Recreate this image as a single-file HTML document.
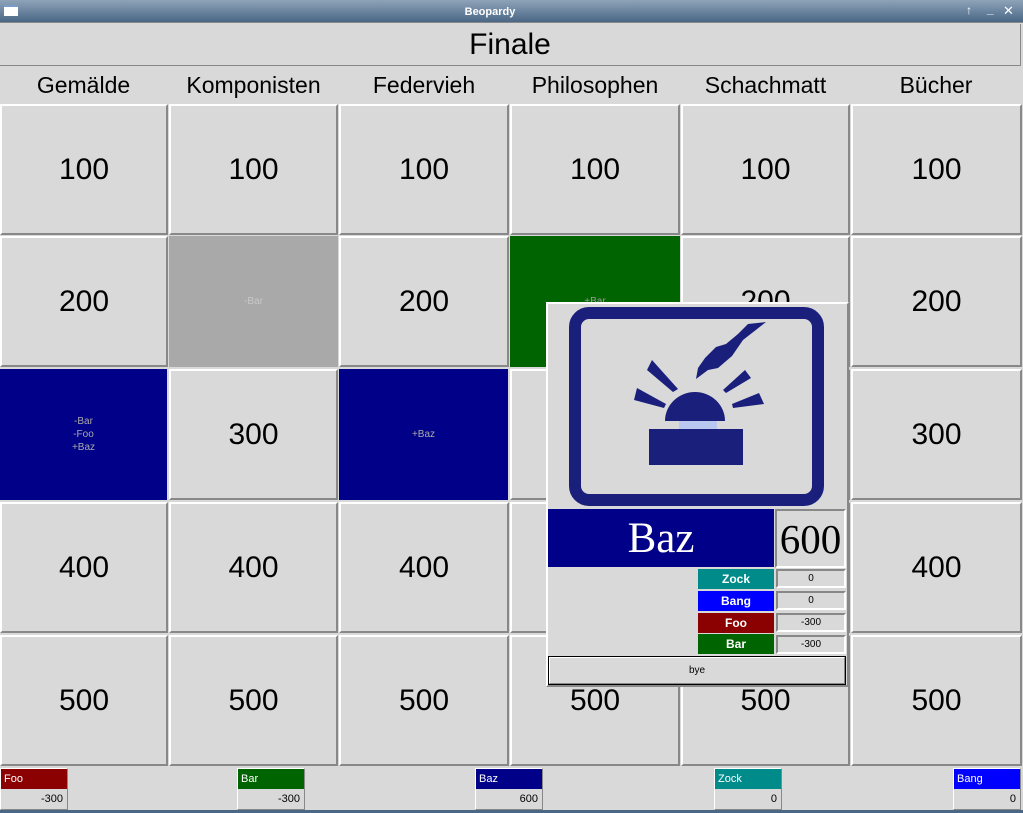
<!DOCTYPE html>
<html><head><meta charset="utf-8"><style>
*{margin:0;padding:0;box-sizing:border-box}
body{width:1023px;height:813px;overflow:hidden;background:#d9d9d9;font-family:"Liberation Sans","DejaVu Sans",sans-serif;position:relative}
.a{position:absolute}
.tb{left:0;top:0;width:1023px;height:23px;background:linear-gradient(#8ea3b8,#4a6786);border-bottom:1px solid #888}
.cell{position:absolute;background:#d9d9d9;border-top:2px solid #fff;border-left:2px solid #fff;border-right:2px solid #888;border-bottom:2px solid #888;display:flex;align-items:center;justify-content:center;font-size:30px;color:#000}
.flat{border:none}
.small{font-size:10px;color:#aaa;text-align:center;line-height:13px}
.hd{position:absolute;top:67px;height:36px;font-size:23px;display:flex;align-items:center;justify-content:center}
.pl{position:absolute;top:768px;width:68px;height:42px;border:1px solid #fff;border-right-color:#888;border-bottom-color:#888;background:#d9d9d9}
.pl .h{height:20px;color:#fff;font-size:11px;padding:4px 0 0 3px}
.pl .v{font-size:11px;text-align:right;padding:4px 4px 0 0}
.lab{position:absolute;left:698px;width:76px;height:20px;color:#fff;font-weight:bold;font-size:12px;display:flex;align-items:center;justify-content:center}
.val{position:absolute;left:776px;width:70px;height:19px;border:2px solid #888;border-right-color:#fff;border-bottom-color:#fff;font-size:10px;display:flex;align-items:center;justify-content:center}
</style></head><body>
<div class="a tb"></div>
<div class="a" style="left:4px;top:5px;width:14px;height:11px;background:#fff;border-top:2px solid #7a9cc8"></div>
<div class="a" style="left:0;top:6px;width:980px;text-align:center;color:#fff;font-size:11px;font-weight:bold">Beopardy</div>
<div class="a" style="left:966px;top:3px;color:#fff;font-size:12px;font-weight:bold">↑</div>
<div class="a" style="left:987px;top:2px;color:#fff;font-size:12px;font-weight:bold">_</div>
<div class="a" style="left:1003px;top:3px;color:#fff;font-size:13px;font-weight:bold">✕</div>
<div class="a" style="left:0;top:24px;width:1021px;height:42px;border-bottom:1px solid #888;border-right:1px solid #888;display:flex;align-items:center;justify-content:center;font-size:30px">Finale</div>
<div class="hd" style="left:0;width:167px">Gemälde</div>
<div class="hd" style="left:169px;width:169px">Komponisten</div>
<div class="hd" style="left:339px;width:170px">Federvieh</div>
<div class="hd" style="left:510px;width:170px">Philosophen</div>
<div class="hd" style="left:681px;width:169px">Schachmatt</div>
<div class="hd" style="left:851px;width:170px">Bücher</div>

<div class="cell" style="left:0;top:104px;width:168px;height:131px">100</div>
<div class="cell" style="left:169px;top:104px;width:169px;height:131px">100</div>
<div class="cell" style="left:339px;top:104px;width:170px;height:131px">100</div>
<div class="cell" style="left:510px;top:104px;width:170px;height:131px">100</div>
<div class="cell" style="left:681px;top:104px;width:169px;height:131px">100</div>
<div class="cell" style="left:851px;top:104px;width:171px;height:131px">100</div>
<div class="cell" style="left:0;top:236px;width:168px;height:131px">200</div>
<div class="cell flat small" style="left:169px;top:236px;width:169px;height:131px;background:#a9a9a9;color:#c8c8c8">-Bar</div>
<div class="cell" style="left:339px;top:236px;width:170px;height:131px">200</div>
<div class="cell flat small" style="left:510px;top:236px;width:170px;height:131px;background:#006400;color:#9a9a9a">+Bar</div>
<div class="cell" style="left:681px;top:236px;width:169px;height:131px">200</div>
<div class="cell" style="left:851px;top:236px;width:171px;height:131px">200</div>
<div class="cell flat small" style="left:0;top:369px;width:167px;height:131px;background:#000088;color:#aaa">-Bar<br>-Foo<br>+Baz</div>
<div class="cell" style="left:169px;top:369px;width:169px;height:131px">300</div>
<div class="cell flat small" style="left:339px;top:369px;width:169px;height:131px;background:#000088;color:#aaa">+Baz</div>
<div class="cell" style="left:510px;top:369px;width:170px;height:131px">300</div>
<div class="cell" style="left:681px;top:369px;width:169px;height:131px">300</div>
<div class="cell" style="left:851px;top:369px;width:171px;height:131px">300</div>
<div class="cell" style="left:0;top:502px;width:168px;height:131px">400</div>
<div class="cell" style="left:169px;top:502px;width:169px;height:131px">400</div>
<div class="cell" style="left:339px;top:502px;width:170px;height:131px">400</div>
<div class="cell" style="left:510px;top:502px;width:170px;height:131px">400</div>
<div class="cell" style="left:681px;top:502px;width:169px;height:131px">400</div>
<div class="cell" style="left:851px;top:502px;width:171px;height:131px">400</div>
<div class="cell" style="left:0;top:635px;width:168px;height:131px">500</div>
<div class="cell" style="left:169px;top:635px;width:169px;height:131px">500</div>
<div class="cell" style="left:339px;top:635px;width:170px;height:131px">500</div>
<div class="cell" style="left:510px;top:635px;width:170px;height:131px">500</div>
<div class="cell" style="left:681px;top:635px;width:169px;height:131px">500</div>
<div class="cell" style="left:851px;top:635px;width:171px;height:131px">500</div>

<div class="pl" style="left:0"><div class="h" style="background:#8b0000">Foo</div><div class="v">-300</div></div>
<div class="pl" style="left:237px"><div class="h" style="background:#006400">Bar</div><div class="v">-300</div></div>
<div class="pl" style="left:475px"><div class="h" style="background:#000088">Baz</div><div class="v">600</div></div>
<div class="pl" style="left:714px"><div class="h" style="background:#008b8b">Zock</div><div class="v">0</div></div>
<div class="pl" style="left:953px"><div class="h" style="background:#0000ff">Bang</div><div class="v">0</div></div>
<div class="a" style="left:0;top:810px;width:1023px;height:3px;background:#4a6786"></div>

<div class="a" style="left:546px;top:302px;width:303px;height:385px;background:#d9d9d9;border:2px solid #fff;border-right-color:#888;border-bottom-color:#888"></div>
<svg class="a" style="left:548px;top:304px" width="298" height="204" viewBox="0 0 298 204">
<rect x="27" y="9" width="243" height="187" rx="14" fill="none" stroke="#1a1f7c" stroke-width="12"/>
<path d="M218 18 L200 20 L190 30 L178 40 L168 43 L157 54 L150 64 L148 75 L152 72 L160 66 L170 64 L184 52 L195 36 Z" fill="#1a1f7c"/>
<path d="M104 56 L130 85 L125 88 L99 66 Z" fill="#1a1f7c"/>
<path d="M89 84 L118 100 L116 104 L86 96 Z" fill="#1a1f7c"/>
<path d="M197 66 L203 74 L178 89 L175 86 Z" fill="#1a1f7c"/>
<path d="M211 89 L216 100 L185 104 L184 100 Z" fill="#1a1f7c"/>
<path d="M117 117 A30 29 0 0 1 177 117 Z" fill="#1a1f7c"/>
<rect x="131" y="117" width="38" height="8" fill="#b8c8f0"/>
<rect x="101" y="125" width="94" height="36" fill="#1a1f7c"/>
</svg>
<div class="a" style="left:548px;top:509px;width:226px;height:58px;background:#000088;color:#fff;font-family:'Liberation Serif',serif;font-size:43px;display:flex;align-items:center;justify-content:center">Baz</div>
<div class="a" style="left:775px;top:509px;width:71px;height:59px;border:2px solid #888;border-right-color:#fff;border-bottom-color:#fff;font-family:'Liberation Serif',serif;font-size:41px;display:flex;align-items:center;justify-content:center">600</div>
<div class="lab" style="top:569px;background:#008b8b">Zock</div><div class="val" style="top:569px">0</div>
<div class="lab" style="top:591px;background:#0000ff">Bang</div><div class="val" style="top:591px">0</div>
<div class="lab" style="top:613px;background:#8b0000">Foo</div><div class="val" style="top:613px">-300</div>
<div class="lab" style="top:634px;background:#006400">Bar</div><div class="val" style="top:635px">-300</div>
<div class="a" style="left:548px;top:656px;width:298px;height:29px;border:1px solid #000;display:flex;align-items:center;justify-content:center;font-size:10px"><div style="position:absolute;inset:0;border:1px solid #fff;border-right-color:#888;border-bottom-color:#888"></div>bye</div>
</body></html>
